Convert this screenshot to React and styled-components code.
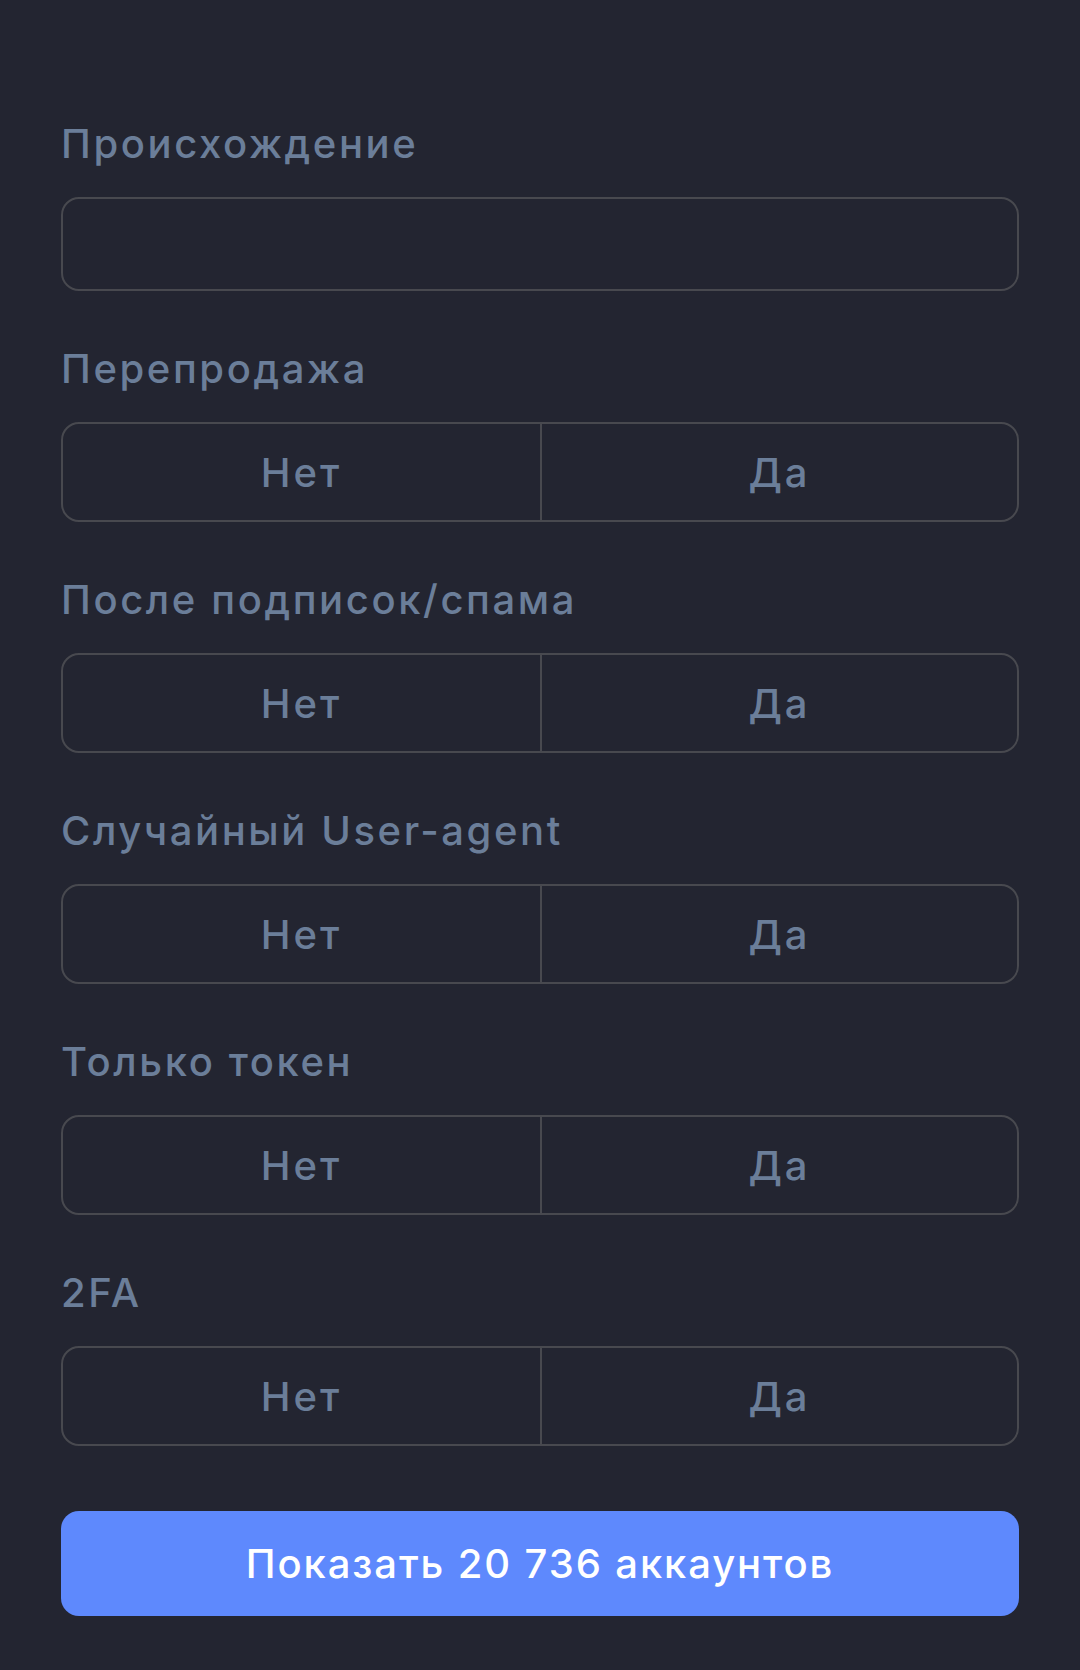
import React from 'react'
import styled, { createGlobalStyle } from 'styled-components'

const GlobalStyle = createGlobalStyle`
	html, body {
		margin: 0;
		padding: 0;
		background: #232531;
	}
	body {
		font-family: 'Inter', 'Noto Sans', sans-serif;
	}
`

const fields = [
	'Перепродажа',
	'После подписок/спама',
	'Случайный User-agent',
	'Только токен',
	'2FA',
]

const Filters = () => {
	return (
		<Wrapper>
			<Field>
				<Label>Происхождение</Label>
				<Input type='text' />
			</Field>
			{fields.map((name) => (
				<Field key={name}>
					<Label>{name}</Label>
					<Toggle>
						<Option>Нет</Option>
						<Option>Да</Option>
					</Toggle>
				</Field>
			))}
			<Submit>Показать 20 736 аккаунтов</Submit>
		</Wrapper>
	)
}

const App = () => (
	<>
		<GlobalStyle />
		<Filters />
	</>
)

const Wrapper = styled.div`
	min-height: 1670px;
	box-sizing: border-box;
	padding: 120px 61px 0;
	background: #232531;
	display: flex;
	flex-direction: column;
	gap: 54px;
`

const Field = styled.div`
	display: flex;
	flex-direction: column;
`

const Label = styled.div`
	font-size: 40px;
	line-height: 48px;
	font-weight: 500;
	letter-spacing: 2.6px;
	color: #6b7e99;
	margin-bottom: 29px;
`

const Input = styled.input`
	box-sizing: border-box;
	height: 94px;
	width: 100%;
	background: transparent;
	border: 2.5px solid #48494f;
	border-radius: 18px;
	outline: none;
`

const Toggle = styled.div`
	box-sizing: border-box;
	height: 100px;
	display: grid;
	grid-template-columns: 1fr 1fr;
	border: 2.5px solid #48494f;
	border-radius: 18px;
	overflow: hidden;
`

const Option = styled.button`
	background: transparent;
	border: none;
	padding: 0;
	font-family: inherit;
	font-size: 40px;
	font-weight: 500;
	letter-spacing: 3px;
	color: #6b7e99;
	display: flex;
	align-items: center;
	justify-content: center;

	& + & {
		border-left: 2.5px solid #48494f;
	}
`

const Submit = styled.button`
	margin-top: 11px;
	height: 105px;
	border: none;
	border-radius: 18px;
	background: #5e89fd;
	color: #ffffff;
	font-family: inherit;
	font-size: 40px;
	font-weight: 500;
	letter-spacing: 1.9px;
`

export default App
